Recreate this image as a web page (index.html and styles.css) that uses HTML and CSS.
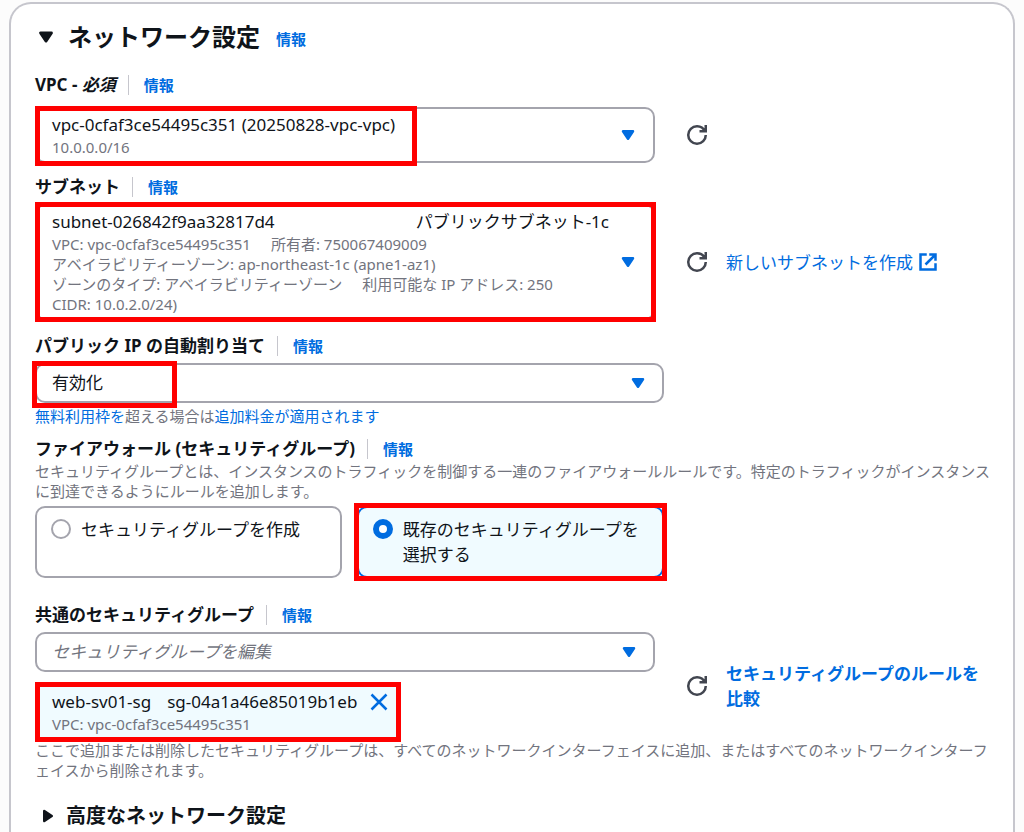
FILE: index.html
```html
<!DOCTYPE html>
<html lang="ja">
<head>
    <meta charset="UTF-8">
    <meta name="viewport" content="width=device-width, initial-scale=1.0">
    <title>ネットワーク設定</title>
    <link rel="stylesheet" href="styles.css">
</head>
<body>

<!-- Shared icons -->
<svg class="sprite" aria-hidden="true">
    <symbol id="caret" viewBox="0 0 16 16">
        <path d="M4 5h8l-4 6-4-6z" fill="currentColor" stroke="currentColor" stroke-width="2" stroke-linejoin="round"/>
    </symbol>
    <symbol id="refresh" viewBox="0 0 16 16">
        <path d="M10 5h5V0M15 8a6.957 6.957 0 0 1-7 7 6.957 6.957 0 0 1-7-7 6.957 6.957 0 0 1 7-7 6.87 6.87 0 0 1 6.3 4" fill="none" stroke="currentColor" stroke-width="2"/>
    </symbol>
    <symbol id="external" viewBox="0 0 16 16">
        <path d="M9 2h5v5M6 10l8-8M14 9v5H2V2h5" fill="none" stroke="currentColor" stroke-width="2"/>
    </symbol>
    <symbol id="close" viewBox="0 0 16 16">
        <path d="M2 2l12 12M14 2L2 14" fill="none" stroke="currentColor" stroke-width="2"/>
    </symbol>
</svg>

<main class="card">
    <header class="card-header">
        <button class="toggle" type="button" aria-expanded="true" aria-label="ネットワーク設定を折りたたむ">
            <svg class="icon"><use href="#caret"/></svg>
        </button>
        <h2>ネットワーク設定</h2>
        <a class="info" href="#">情報</a>
    </header>

    <!-- VPC -->
    <section class="field field-vpc">
        <div class="label-row">
            <span class="label" id="vpc-label">VPC - <em>必須</em></span>
            <a class="info" href="#">情報</a>
        </div>
        <div class="row">
            <button class="dropdown" type="button" aria-haspopup="listbox" aria-labelledby="vpc-label vpc-value">
                <span class="value" id="vpc-value">
                    <span class="main">vpc-0cfaf3ce54495c351 (20250828-vpc-vpc)</span>
                    <span class="sub">10.0.0.0/16</span>
                </span>
                <svg class="icon caret"><use href="#caret"/></svg>
                <span class="mark mark-vpc"></span>
            </button>
            <div class="actions">
                <button class="refresh" type="button" aria-label="VPC を更新"><svg class="icon"><use href="#refresh"/></svg></button>
            </div>
        </div>
    </section>

    <!-- Subnet -->
    <section class="field field-subnet">
        <div class="label-row">
            <span class="label" id="subnet-label">サブネット</span>
            <a class="info" href="#">情報</a>
        </div>
        <div class="row">
            <button class="dropdown" type="button" aria-haspopup="listbox" aria-labelledby="subnet-label subnet-value">
                <span class="value" id="subnet-value">
                    <span class="main"><span>subnet-026842f9aa32817d4</span><span>パブリックサブネット-1c</span></span>
                    <span class="sub tags"><span>VPC: vpc-0cfaf3ce54495c351</span><span>所有者: 750067409009</span></span>
                    <span class="sub">アベイラビリティーゾーン: ap-northeast-1c (apne1-az1)</span>
                    <span class="sub tags"><span>ゾーンのタイプ: アベイラビリティーゾーン</span><span>利用可能な IP アドレス: 250</span></span>
                    <span class="sub">CIDR: 10.0.2.0/24)</span>
                </span>
                <svg class="icon caret"><use href="#caret"/></svg>
                <span class="mark mark-subnet"></span>
            </button>
            <div class="actions">
                <button class="refresh" type="button" aria-label="サブネットを更新"><svg class="icon"><use href="#refresh"/></svg></button>
                <a class="link" href="#">新しいサブネットを作成<svg class="icon"><use href="#external"/></svg></a>
            </div>
        </div>
    </section>

    <!-- Public IP -->
    <section class="field field-ip">
        <div class="label-row">
            <label class="label" for="public-ip">パブリック IP の自動割り当て</label>
            <a class="info" href="#">情報</a>
        </div>
        <div class="wide">
            <div class="select">
                <select id="public-ip">
                    <option>有効化</option>
                    <option>無効化</option>
                </select>
                <svg class="icon caret"><use href="#caret"/></svg>
                <span class="mark mark-ip"></span>
            </div>
        </div>
        <p class="help"><a href="#">無料利用枠を</a>超える場合は<a href="#">追加料金が適用されます</a></p>
    </section>

    <!-- Firewall -->
    <section class="field field-firewall">
        <div class="label-row">
            <span class="label" id="firewall-label">ファイアウォール (セキュリティグループ)</span>
            <a class="info" href="#">情報</a>
        </div>
        <p class="help">セキュリティグループとは、インスタンスのトラフィックを制御する一連のファイアウォールルールです。特定のトラフィックがインスタンスに到達できるようにルールを追加します。</p>
        <div class="wide">
            <div class="tiles" role="radiogroup" aria-labelledby="firewall-label">
                <label class="tile">
                    <input type="radio" name="firewall">
                    <span>セキュリティグループを作成</span>
                </label>
                <label class="tile selected">
                    <input type="radio" name="firewall" checked>
                    <span>既存のセキュリティグループを選択する</span>
                    <span class="mark mark-tile"></span>
                </label>
            </div>
        </div>
    </section>

    <!-- Security groups -->
    <section class="field field-groups">
        <div class="label-row">
            <label class="label" for="groups">共通のセキュリティグループ</label>
            <a class="info" href="#">情報</a>
        </div>
        <div class="row">
            <div>
                <div class="select placeholder">
                    <select id="groups">
                        <option>セキュリティグループを編集</option>
                    </select>
                    <svg class="icon caret"><use href="#caret"/></svg>
                </div>
                <div class="token">
                    <div>
                        <div class="token-name"><span>web-sv01-sg</span><span>sg-04a1a46e85019b1eb</span></div>
                        <div class="sub">VPC: vpc-0cfaf3ce54495c351</div>
                    </div>
                    <button class="dismiss" type="button" aria-label="web-sv01-sg を削除"><svg class="icon"><use href="#close"/></svg></button>
                    <span class="mark mark-token"></span>
                </div>
            </div>
            <div class="actions">
                <button class="refresh" type="button" aria-label="セキュリティグループを更新"><svg class="icon"><use href="#refresh"/></svg></button>
                <a class="link strong" href="#">セキュリティグループのルールを比較</a>
            </div>
        </div>
        <p class="help">ここで追加または削除したセキュリティグループは、すべてのネットワークインターフェイスに追加、またはすべてのネットワークインターフェイスから削除されます。</p>
    </section>

    <button class="advanced" type="button" aria-expanded="false">
        <svg class="icon"><use href="#caret"/></svg>
        高度なネットワーク設定
    </button>
</main>

</body>
</html>
```

FILE: styles.css
```css
* {
    box-sizing: border-box;
}
body {
    margin: 0;
    padding: 2px 9px 0;
    background: #fcfcfc;
    color: #0f141a;
    font-family: "Noto Sans", "Noto Sans CJK JP", sans-serif;
    font-size: 17px;
    line-height: 24px;
    line-break: loose;
}
button, select {
    font: inherit;
    color: inherit;
    margin: 0;
    padding: 0;
    border: none;
    background: none;
    text-align: left;
}
a {
    color: #006ce0;
    text-decoration: none;
}
h2, p {
    margin: 0;
}
.sprite {
    display: none;
}
.icon {
    display: block;
    flex: none;
    width: 20px;
    height: 20px;
}
.card {
    padding: 15px 14px 16px 24px;
    background: #fff;
    border: 2px solid #c6c6cd;
    border-bottom: none;
    border-radius: 22px 22px 0 0;
}

/* Header */
.card-header {
    display: flex;
    align-items: center;
    height: 36px;
    margin-bottom: 18px;
}
.card-header h2 {
    margin: 0 16px 0 11px;
    font-size: 24px;
    line-height: 36px;
}
.card-header .info {
    padding-top: 4px;
}
.toggle .icon {
    width: 22px;
    height: 22px;
}
.info {
    font-size: 15px;
    font-weight: bold;
}

/* Fields */
.label-row {
    display: flex;
    align-items: center;
    height: 24px;
    margin-bottom: 5px;
}
.label {
    font-weight: bold;
}
.label-row .info {
    margin-left: 12px;
    padding-left: 15px;
    border-left: 1px solid #c6c6cd;
    line-height: 20px;
}
.field-vpc .label-row {
    margin-bottom: 10px;
}
.field-vpc {
    margin-bottom: 12px;
}
.field-subnet {
    margin-bottom: 14px;
}
.field-ip {
    margin-bottom: 11px;
}
.field-firewall {
    margin-bottom: 25px;
}
.field-firewall .label-row {
    margin-bottom: 0;
}
.field-groups {
    margin-bottom: 24px;
}
.row {
    display: grid;
    grid-template-columns: 2fr 1fr;
    gap: 32px;
    align-items: center;
    padding-right: 2px;
}
.wide {
    display: grid;
    grid-template-columns: 15fr 8fr;
}
.dropdown, .select {
    position: relative;
    display: flex;
    align-items: center;
    border: 2px solid #a4a4ad;
    border-radius: 10px;
    background: #fff;
}
.dropdown {
    padding: 4px 15px;
}
.value {
    flex: 1;
    margin-right: 9px;
}
.main {
    display: flex;
    justify-content: space-between;
}
.sub, .help {
    color: #72747e;
    font-size: 15px;
    line-height: 20px;
}
.sub {
    display: block;
}
.tags {
    display: flex;
    gap: 20px;
}
.caret {
    color: #006ce0;
}
.select select {
    flex: 1;
    width: 100%;
    height: 36px;
    padding: 0 50px 0 15px;
    appearance: none;
    border-radius: 10px;
}
.select .caret {
    position: absolute;
    right: 14px;
    pointer-events: none;
}
.placeholder select {
    color: #72747e;
    font-style: italic;
}
.field-ip .help {
    margin-top: 3px;
}
.actions {
    display: flex;
    align-items: center;
    gap: 19px;
    padding-right: 12px;
}
.refresh {
    color: #424650;
}
.link {
    display: flex;
    align-items: center;
    gap: 5px;
    line-height: 25px;
}
.strong {
    font-weight: bold;
}

/* Radio tiles */
.tiles {
    display: grid;
    grid-template-columns: 1fr 1fr;
    gap: 15px;
    margin-top: 5px;
}
.tile {
    position: relative;
    display: flex;
    align-items: flex-start;
    gap: 10px;
    min-height: 72px;
    padding: 9px 14px;
    border: 2px solid #a4a4ad;
    border-radius: 10px;
    line-height: 25px;
}
.tile input {
    flex: none;
    appearance: none;
    width: 20px;
    height: 20px;
    margin: 2px 0 0;
    border: 2px solid #a4a4ad;
    border-radius: 50%;
    background: #fff;
}
.tile input:checked {
    border: 6px solid #006ce0;
}
.tile.selected {
    border-color: #006ce0;
    background: #f0fbff;
}

/* Security group token */
.token {
    position: relative;
    display: flex;
    align-items: flex-start;
    gap: 12px;
    width: fit-content;
    margin-top: 12px;
    padding: 6px 12px 6px 17px;
    background: #f0fbff;
}
.token-name {
    display: flex;
    gap: 16px;
}
.dismiss {
    padding-top: 2px;
    color: #006ce0;
}

/* Red highlight frames */
.mark {
    position: absolute;
    border: 5px solid #f00;
    pointer-events: none;
}
.mark-vpc {
    top: -3px;
    bottom: -5px;
    left: -2px;
    width: 382px;
}
.mark-subnet {
    inset: -4px -3px -4px -2px;
}
.mark-ip {
    top: -4px;
    bottom: -7px;
    left: -5px;
    width: 145px;
}
.mark-tile {
    inset: -5px;
}
.mark-token {
    inset: -2px 0;
}

.advanced {
    display: flex;
    align-items: center;
    gap: 8px;
    padding-left: 3px;
    font-size: 20px;
    font-weight: bold;
}
.advanced .icon {
    transform: rotate(-90deg);
}
```
